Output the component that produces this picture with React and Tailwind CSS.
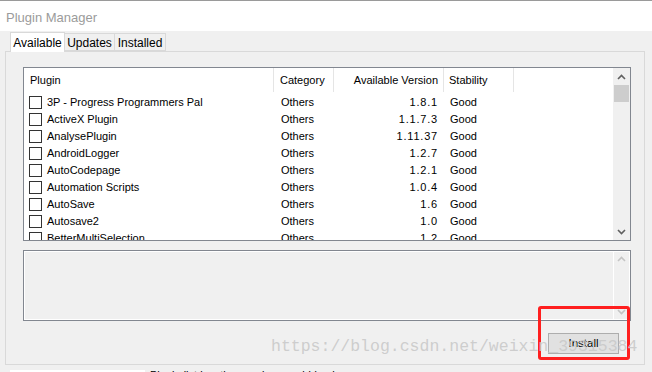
import React from 'react';

const plugins = [
  ['3P - Progress Programmers Pal', '1.8.1'],
  ['ActiveX Plugin', '1.1.7.3'],
  ['AnalysePlugin', '1.11.37'],
  ['AndroidLogger', '1.2.7'],
  ['AutoCodepage', '1.2.1'],
  ['Automation Scripts', '1.0.4'],
  ['AutoSave', '1.6'],
  ['Autosave2', '1.0'],
  ['BetterMultiSelection', '1.2'],
];

const Chevron = ({ up, color }) => (
  <svg width="9" height="6" viewBox="0 0 9 6">
    <path d={up ? 'M1 5 L4.5 1.5 L8 5' : 'M1 1 L4.5 4.5 L8 1'} fill="none" stroke={color} strokeWidth="1.6" />
  </svg>
);

const Tab = ({ label, active, w }) => (
  <div
    className={`${w} border border-[#d9d9d9] text-[12px] leading-none flex items-center justify-center ${
      active ? 'h-[20px] bg-white border-b-0 -mb-px z-10 pt-[1px]' : 'h-[18px] bg-[#f0f0f0] -ml-px pt-[2px]'
    }`}
  >
    {label}
  </div>
);

export default function App() {
  return (
    <div
      className="w-[652px] h-[372px] bg-[#f0f0f0] relative overflow-hidden text-[#000]"
      style={{ fontFamily: '"Liberation Sans", Arial, sans-serif' }}
    >
      {/* title bar */}
      <div className="h-[31px] bg-white border-t border-[#9a9a9a] flex items-center pl-[6px] pt-[3px]">
        <span className="text-[13px] text-[#9b9b9b]">Plugin Manager</span>
      </div>

      {/* tabs */}
      <div className="flex items-end pl-[10px] h-[20px]">
        <Tab label="Available" active w="w-[55px]" />
        <Tab label="Updates" w="w-[51px]" />
        <Tab label="Installed" w="w-[52px]" />
      </div>

      {/* panel */}
      <div className="mx-[5px] w-[640px] h-[314px] border border-[#d9d9d9] bg-[#f0f0f0] pt-[15px] pl-[17px]">
        {/* list */}
        <div className="w-[608px] h-[174px] border border-[#828790] bg-white flex overflow-hidden">
          <div className="flex-1 flex flex-col">
            <div className="h-[26px] shrink-0 flex items-center text-[11px] pb-[2px]">
              <div className="w-[250px] pl-[6px] h-full flex items-center border-r border-[#e5e5e5]">Plugin</div>
              <div className="w-[60px] pl-[6px] h-full flex items-center border-r border-[#e5e5e5]">Category</div>
              <div className="w-[110px] pr-[5px] h-full flex items-center justify-end border-r border-[#e5e5e5]">Available Version</div>
              <div className="w-[70px] pl-[5px] h-full flex items-center border-r border-[#e5e5e5]">Stability</div>
            </div>
            {plugins.map(([name, ver]) => (
              <div key={name} className="h-[17px] flex items-center text-[11px] shrink-0">
                <div className="w-[250px] pl-[5px] flex items-center gap-[5px]">
                  <span className="w-[13px] h-[13px] border border-[#333] bg-white shrink-0" />
                  <span className="whitespace-nowrap">{name}</span>
                </div>
                <div className="w-[60px] pl-[7px]">Others</div>
                <div className="w-[110px] pr-[6px] text-right tracking-[0.8px]">{ver}</div>
                <div className="w-[70px] pl-[6px]">Good</div>
              </div>
            ))}
          </div>
          <div className="w-[17px] bg-[#f0f0f0] flex flex-col items-center">
            <div className="h-[17px] flex items-center justify-center">
              <Chevron up color="#606060" />
            </div>
            <div className="w-[15px] h-[17px] bg-[#cdcdcd]" />
            <div className="flex-1" />
            <div className="h-[17px] flex items-center justify-center">
              <Chevron color="#606060" />
            </div>
          </div>
        </div>

        {/* description */}
        <div className="mt-[9px] w-[608px] h-[71px] border border-[#828790] bg-[#f0f0f0] flex">
          <div className="flex-1 border border-white border-r-0" />
          <div className="w-[17px] border border-white flex flex-col items-center justify-between py-[4px]">
            <Chevron up color="#c4c4c4" />
            <Chevron color="#c4c4c4" />
          </div>
        </div>

        {/* button */}
        <div className="flex justify-end pr-[25px] mt-[12px]">
          <div className="w-[71px] h-[21px] bg-[#e1e1e1] border border-[#adadad] flex items-center justify-center text-[11.5px]">
            Install
          </div>
        </div>
      </div>

      {/* bottom row */}
      <div className="flex items-start mt-[5px] pl-[10px] gap-[5px]">
        <div className="w-[135px] h-[10px] bg-white" />
        <span className="text-[11px] leading-none whitespace-nowrap">Plugin list location can be overridden here</span>
      </div>

      {/* annotation overlay */}
      <div className="absolute left-[538px] top-[306px] w-[92px] h-[54px] border-[3px] border-[#ff1f1f] rounded-[3px]" />

      {/* watermark overlay */}
      <div
        className="absolute left-[271px] top-[339px] text-[16.5px] leading-none text-[#c9c9c9]/90 whitespace-nowrap"
        style={{ fontFamily: '"Liberation Mono", monospace' }}
      >
        https://blog.csdn.net/weixin_39315384
      </div>
    </div>
  );
}
